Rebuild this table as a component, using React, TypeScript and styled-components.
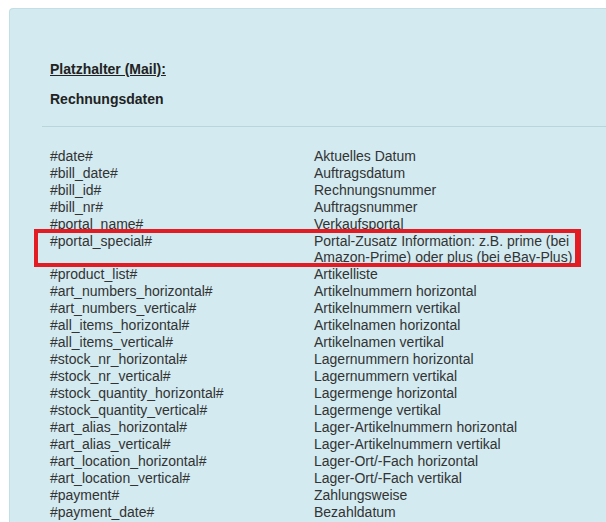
import React from "react";
import styled, { createGlobalStyle } from "styled-components";

const Global = createGlobalStyle`
  html, body {
    margin: 0;
    padding: 0;
    background: #ffffff;
    overflow: hidden;
  }
  body {
    font-family: "Liberation Sans", Arial, sans-serif;
    font-size: 14px;
    color: #333333;
  }
`;

const Panel = styled.section`
  margin: 8px 0 0 9px;
  width: 720px;
  background: #d2eaf0;
  border-top: 1px solid #c2dfe6;
  border-left: 1px solid #c2dfe6;
  border-top-left-radius: 4px;
  padding: 52px 0 10px 32px;
  box-sizing: border-box;
`;

const Heading = styled.h2`
  margin: 0;
  padding-left: 8px;
  font-size: 14px;
  line-height: 17px;
  font-weight: bold;
  color: #222222;
  text-decoration: underline;
`;

const SubHeading = styled.h3`
  margin: 13px 0 0;
  padding-left: 8px;
  font-size: 14px;
  line-height: 17px;
  font-weight: bold;
  color: #222222;
`;

const Divider = styled.hr`
  margin: 18px 0 21px;
  border: 0;
  height: 1px;
  background: #b9d5dc;
`;

const List = styled.div`
  padding-left: 8px;
  display: flex;
  flex-direction: column;
`;

const Row = styled.div`
  position: relative;
  display: grid;
  grid-template-columns: 264px 268px;
  line-height: 16px;
  padding: 0 0 1px;
  color: #333333;
`;

const Key = styled.span``;
const Value = styled.span``;

const Highlight = styled.div`
  position: absolute;
  top: -4px;
  left: -16px;
  width: 547px;
  height: 38px;
  box-sizing: border-box;
  border: 4px solid #e31b23;
  border-right-width: 6px;
  pointer-events: none;
`;

const rows: { key: string; value: string; marked?: boolean }[] = [
  { key: "#date#", value: "Aktuelles Datum" },
  { key: "#bill_date#", value: "Auftragsdatum" },
  { key: "#bill_id#", value: "Rechnungsnummer" },
  { key: "#bill_nr#", value: "Auftragsnummer" },
  { key: "#portal_name#", value: "Verkaufsportal" },
  {
    key: "#portal_special#",
    value: "Portal-Zusatz Information: z.B. prime (bei Amazon-Prime) oder plus (bei eBay-Plus)",
    marked: true,
  },
  { key: "#product_list#", value: "Artikelliste" },
  { key: "#art_numbers_horizontal#", value: "Artikelnummern horizontal" },
  { key: "#art_numbers_vertical#", value: "Artikelnummern vertikal" },
  { key: "#all_items_horizontal#", value: "Artikelnamen horizontal" },
  { key: "#all_items_vertical#", value: "Artikelnamen vertikal" },
  { key: "#stock_nr_horizontal#", value: "Lagernummern horizontal" },
  { key: "#stock_nr_vertical#", value: "Lagernummern vertikal" },
  { key: "#stock_quantity_horizontal#", value: "Lagermenge horizontal" },
  { key: "#stock_quantity_vertical#", value: "Lagermenge vertikal" },
  { key: "#art_alias_horizontal#", value: "Lager-Artikelnummern horizontal" },
  { key: "#art_alias_vertical#", value: "Lager-Artikelnummern vertikal" },
  { key: "#art_location_horizontal#", value: "Lager-Ort/-Fach horizontal" },
  { key: "#art_location_vertical#", value: "Lager-Ort/-Fach vertikal" },
  { key: "#payment#", value: "Zahlungsweise" },
  { key: "#payment_date#", value: "Bezahldatum" },
];

export default function App() {
  return (
    <>
      <Global />
      <Panel>
        <Heading>Platzhalter (Mail):</Heading>
        <SubHeading>Rechnungsdaten</SubHeading>
        <Divider />
        <List>
          {rows.map((r) => (
            <Row key={r.key}>
              <Key>{r.key}</Key>
              <Value>{r.value}</Value>
              {r.marked && <Highlight />}
            </Row>
          ))}
        </List>
      </Panel>
    </>
  );
}
